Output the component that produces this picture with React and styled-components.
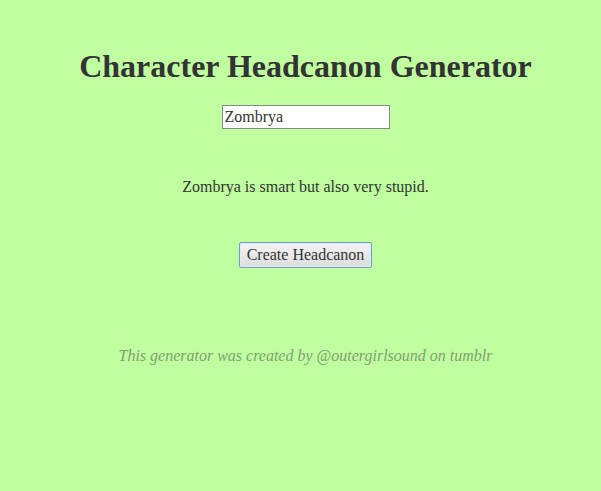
import React, { useState } from 'react';
import styled, { createGlobalStyle } from 'styled-components';

const Global = createGlobalStyle`
body {
  margin: 0;
  background: #c0ffa0;
  font-family: "Liberation Serif", "Times New Roman", serif;
  color: #333;
}
`

const Page = styled.div`
display: flex;
flex-direction: column;
align-items: center;
padding: 48px 0 0 10px;
`

const Title = styled.h1`
margin: 0;
font-size: 32px;
font-weight: bold;
color: #333;
`

const NameInput = styled.input`
margin-top: 20px;
width: 162px;
height: 20px;
padding: 1px 2px;
border: 1px solid #888;
font-family: "Liberation Serif", serif;
font-size: 16px;
color: #333;
background: #fff;
outline: none;
`

const Result = styled.p`
margin: 49px 0 0;
font-size: 16px;
`

const CreateButton = styled.button`
margin-top: 46px;
height: 26px;
padding: 0 7px;
font-family: "Liberation Serif", serif;
font-size: 16px;
color: #333;
border: 1px solid #6f9cc8;
border-radius: 2px;
background: linear-gradient(#f4f4f4, #dcdcdc);
box-shadow: inset 0 0 0 1px #dfe9f3;
`

const Credit = styled.p`
margin: 79px 0 0;
font-size: 16px;
font-style: italic;
color: #80a070;
`

export default function App() {
  const [name, setName] = useState('Zombrya');
  return (
    <Page>
      <Global />
      <Title>Character Headcanon Generator</Title>
      <NameInput value={name} onChange={e => setName(e.target.value)} />
      <Result>{name} is smart but also very stupid.</Result>
      <CreateButton>Create Headcanon</CreateButton>
      <Credit>This generator was created by @outergirlsound on tumblr</Credit>
    </Page>
  );
}
